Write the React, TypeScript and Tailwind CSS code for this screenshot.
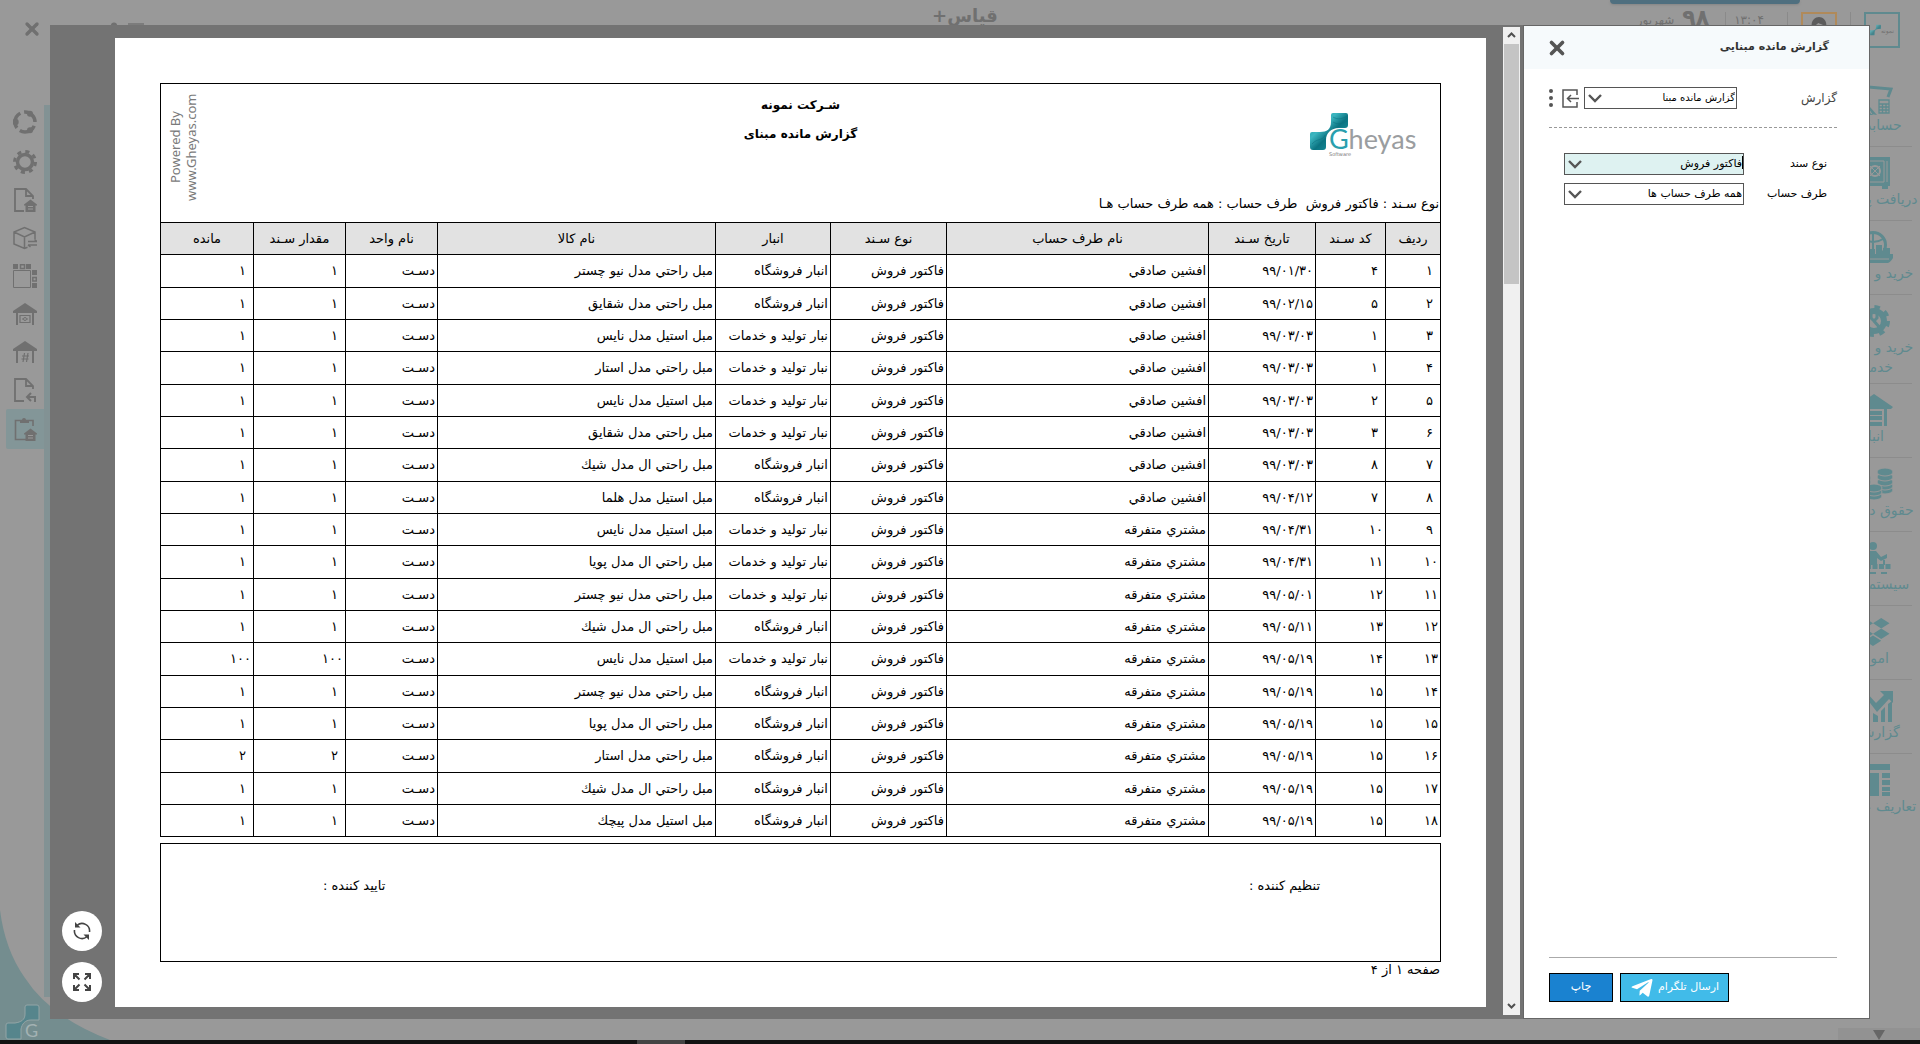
import { ReactNode, useState } from 'react';
import clsx from 'clsx';
import { X, Settings } from 'lucide-react';
import { FaTelegramPlane, FaDropbox } from 'react-icons/fa';

type Row = [string, string, string, string, string, string, string];

const FACTORY = 'نبار تولید و خدمات';
const STORE = 'انبار فروشگاه';
const AFSHIN = 'افشین صادقي';
const OTHER = 'مشتري متفرقه';

// ردیف، کد سند، تاریخ، طرف حساب، انبار، کالا، مقدار
const ROWS: Row[] = [
  ['۱', '۴', '۹۹/۰۱/۳۰', AFSHIN, STORE, 'مبل راحتي مدل نيو چستر', '۱'],
  ['۲', '۵', '۹۹/۰۲/۱۵', AFSHIN, STORE, 'مبل راحتي مدل شقايق', '۱'],
  ['۳', '۱', '۹۹/۰۳/۰۳', AFSHIN, FACTORY, 'مبل استيل مدل نايس', '۱'],
  ['۴', '۱', '۹۹/۰۳/۰۳', AFSHIN, FACTORY, 'مبل راحتي مدل استار', '۱'],
  ['۵', '۲', '۹۹/۰۳/۰۳', AFSHIN, FACTORY, 'مبل استيل مدل نايس', '۱'],
  ['۶', '۳', '۹۹/۰۳/۰۳', AFSHIN, FACTORY, 'مبل راحتي مدل شقايق', '۱'],
  ['۷', '۸', '۹۹/۰۳/۰۳', AFSHIN, STORE, 'مبل راحتي ال مدل شيك', '۱'],
  ['۸', '۷', '۹۹/۰۴/۱۲', AFSHIN, STORE, 'مبل استيل مدل هلما', '۱'],
  ['۹', '۱۰', '۹۹/۰۴/۳۱', OTHER, FACTORY, 'مبل استيل مدل نايس', '۱'],
  ['۱۰', '۱۱', '۹۹/۰۴/۳۱', OTHER, FACTORY, 'مبل راحتي ال مدل پويا', '۱'],
  ['۱۱', '۱۲', '۹۹/۰۵/۰۱', OTHER, FACTORY, 'مبل راحتي مدل نيو چستر', '۱'],
  ['۱۲', '۱۳', '۹۹/۰۵/۱۱', OTHER, STORE, 'مبل راحتي ال مدل شيك', '۱'],
  ['۱۳', '۱۴', '۹۹/۰۵/۱۹', OTHER, FACTORY, 'مبل استيل مدل نايس', '۱۰۰'],
  ['۱۴', '۱۵', '۹۹/۰۵/۱۹', OTHER, STORE, 'مبل راحتي مدل نيو چستر', '۱'],
  ['۱۵', '۱۵', '۹۹/۰۵/۱۹', OTHER, STORE, 'مبل راحتي ال مدل پويا', '۱'],
  ['۱۶', '۱۵', '۹۹/۰۵/۱۹', OTHER, STORE, 'مبل راحتي مدل استار', '۲'],
  ['۱۷', '۱۵', '۹۹/۰۵/۱۹', OTHER, STORE, 'مبل راحتي ال مدل شيك', '۱'],
  ['۱۸', '۱۵', '۹۹/۰۵/۱۹', OTHER, STORE, 'مبل استيل مدل پیچك', '۱'],
];

const COLUMNS = [
  { title: 'ردیف', width: 'w-[55px]' },
  { title: 'کد سـند', width: 'w-[70px]' },
  { title: 'تاریخ سـند', width: 'w-[107px]' },
  { title: 'نام طرف حساب', width: 'w-[262px]' },
  { title: 'نوع سـند', width: 'w-[116px]' },
  { title: 'انبار', width: 'w-[115px]' },
  { title: 'نام کالا', width: 'w-[278px]' },
  { title: 'نام واحد', width: 'w-[92px]' },
  { title: 'مقدار سـند', width: 'w-[92px]' },
  { title: 'مانده', width: 'w-[93px]' },
];

function Emblem({ className }: { className?: string }) {
  return (
    <svg className={className} viewBox="0 0 38 37">
      <defs>
        <linearGradient id="emblem" x1="0" y1="0" x2="1" y2="1">
          <stop offset="0" stopColor="#1595a3" />
          <stop offset="0.35" stopColor="#3cb6c0" />
          <stop offset="0.55" stopColor="#0b7482" />
          <stop offset="1" stopColor="#1fa5b3" />
        </linearGradient>
      </defs>
      <path
        d="M23 0h13a2 2 0 0 1 2 2v10a3 3 0 0 1-3 3h-6c-8 0-13 5-13 12v7a3 3 0 0 1-3 3H3a3 3 0 0 1-3-3V21a2 2 0 0 1 2-2h8c7 0 11-3 11-10V2a2 2 0 0 1 2-2z"
        fill="url(#emblem)"
      />
      <path d="M23 4c5 3 9 2 14-1M23 9c5 3 9 2 14-1M2 31c5-6 11-3 13-9" fill="none" stroke="#0a6f7d" strokeOpacity="0.5" />
    </svg>
  );
}

function ReportLogo() {
  return (
    <div className="relative h-[46px] w-[106px]" dir="ltr">
      <Emblem className="absolute top-0 left-0 h-[37px] w-[38px]" />
      <div className="absolute top-[16px] left-[19px]">
        <p className="h-[22px] font-['Lato'] text-[27px] leading-[20px] text-[#9a9da0]">
          <span className="text-[#2a9fae] [text-shadow:0_0_2px_#fff]">G</span>heyas
        </p>
        <p className="text-[5px] leading-[6px] text-[#777]">Software</p>
      </div>
    </div>
  );
}

function DocIcon({ children }: { children?: ReactNode }) {
  return (
    <svg className="size-6" viewBox="0 0 24 24" fill="none" stroke="currentColor" strokeWidth="1.8">
      <path d="M11 23H2V1h11l7 7v3M13 1v7h7" />
      {children}
    </svg>
  );
}

function House({ children }: { children?: ReactNode }) {
  return (
    <svg className="size-6" viewBox="0 0 24 24" fill="none" stroke="currentColor" strokeWidth="2">
      <path d="M12 1 24 9v2H0V9z" fill="currentColor" stroke="none" />
      <path d="M4 11v12M20 11v12" />
      {children}
    </svg>
  );
}

const smallHouse = (
  <>
    <path d="m17.500 11.500 6.500 5v1h-1.500v6.500h-10v-6.500H11v-1z" fill="currentColor" stroke="none" />
    <path d="M15 18.500h5M15 21h5" stroke="#999" strokeWidth="1" />
  </>
);

const railIcons: { label: string; icon: ReactNode }[] = [
  {
    label: 'گردش',
    icon: (
      <svg className="size-6" viewBox="0 0 24 24" fill="none" stroke="currentColor" strokeWidth="3.500">
        <circle cx="12" cy="12" r="10" strokeDasharray="17 3.940" strokeDashoffset="-4" />
        <g fill="currentColor" stroke="none">
          <circle cx="2.500" cy="12" r="3.200" />
          <circle cx="17" cy="3.800" r="3" />
          <circle cx="17" cy="20.200" r="3" />
        </g>
      </svg>
    ),
  },
  {
    label: 'تنظیمات',
    icon: (
      <svg className="size-6" viewBox="0 0 24 24" fill="none" stroke="currentColor">
        <circle cx="12" cy="12" r="7.500" strokeWidth="3.500" />
        <circle cx="12" cy="12" r="10.500" strokeWidth="3" strokeDasharray="4.100 4.146" />
      </svg>
    ),
  },
  { label: 'سند انبار', icon: <DocIcon>{smallHouse}</DocIcon> },
  {
    label: 'انتقال کالا',
    icon: (
      <svg className="size-6" viewBox="0 0 24 24" fill="none" stroke="currentColor" strokeWidth="1.500">
        <path d="M22 13V6L11.500 1.500 1 6v12l10.500 4.500 3-1.200M1 6l10.500 5L22 6M11.500 11v11.500M15 15.500h9M21.500 13.500l2.500 2M24 19h-9M17.500 21l-2.500-2" />
      </svg>
    ),
  },
  {
    label: 'گزارش جدولی',
    icon: (
      <svg className="size-6" viewBox="0 0 24 24" fill="none" stroke="currentColor" strokeWidth="1">
        <path d="M.5 6.500h17v17H.5z" />
        <path d="M0 0h5v5H0zM13 0h5v5h-5zM19 6h5v5h-5zM19 19h5v5h-5z" fill="currentColor" stroke="none" />
        <path d="M7.500.8h4v3.800h-4zM19.800 13.500h3.500v3.500h-3.500z" strokeWidth="1.500" />
      </svg>
    ),
  },
  {
    label: 'ارزش انبار',
    icon: (
      <House>
        <path d="M7 13.500h10v7H7zM9 17h1m4 0h1" strokeWidth="1.200" />
        <circle cx="12" cy="17" r="1.500" strokeWidth="1" />
      </House>
    ),
  },
  {
    label: 'موجودی انبار',
    icon: (
      <House>
        <path d="m11.500 13-1.500 9M15 13l-1.500 9M9 16h7M8.500 19h7" strokeWidth="1.200" />
      </House>
    ),
  },
  {
    label: 'برگشت',
    icon: (
      <DocIcon>
        <path d="M22 24v-5h-7M18 15l-4 4 4 4" strokeWidth="2" />
      </DocIcon>
    ),
  },
  {
    label: 'گزارش مبنایی',
    icon: (
      <svg className="size-6" viewBox="0 0 24 24" fill="none" stroke="currentColor" strokeWidth="1.600">
        <path d="M20 9V3.500H2.500v19H20" />
        <path d="M7 6V3h2a2 2 0 0 1 4 0h3v3z" fill="currentColor" stroke="none" />
        {smallHouse}
      </svg>
    ),
  },
];

const glyph = 'h-8 w-10 shrink-0';

const menuItems: { label: string[]; icon: ReactNode }[] = [
  {
    label: ['حسابداری'],
    icon: (
      <svg className={glyph} viewBox="0 0 40 32" fill="none" stroke="currentColor">
        <path d="M4 3 38 6l-3 8" strokeWidth="3" />
        <path d="M10 16 24 32l-6-1zM4 4v20l8 8h8l-8-12z" fill="currentColor" stroke="none" />
        <path d="M26 17h10v13H26zM26 21h10M26 24h10M26 27h10M29.500 21v9M33 21v9" strokeWidth="1.300" />
      </svg>
    ),
  },
  {
    label: ['دریافت پرداخت'],
    icon: (
      <svg className={glyph} viewBox="0 0 40 32" fill="none" stroke="currentColor">
        <path d="M2 0h35v29H2zM5 29h6v3H5zM29 29h6v3h-6z" fill="currentColor" stroke="none" />
        <path d="M6 4h25v21H6zM34 4v21" stroke="#999" />
        <circle cx="22" cy="14" r="5" stroke="#999" strokeWidth="2" />
        <path d="m17 9 10 10M27 9 17 19" stroke="#999" />
      </svg>
    ),
  },
  {
    label: ['خرید و فروش'],
    icon: (
      <svg className={glyph} viewBox="0 0 40 32" fill="none" stroke="currentColor">
        <circle cx="20" cy="14" r="12.500" strokeWidth="3" />
        <path d="M20 1v18M10 8c6 4 14 4 20 0" strokeWidth="2" />
        <path d="M2 23h38c2 3-2 8-5 9H6zM17 18h5v6h-5zM23 14h6v9h-6zM30 17h7v7h-7z" fill="currentColor" stroke="none" />
        <path d="M4 28h32" stroke="#999" />
      </svg>
    ),
  },
  {
    label: ['خرید و فروش', 'خدمات'],
    icon: (
      <svg className={glyph} viewBox="0 0 40 32" fill="none" stroke="currentColor">
        <circle cx="21" cy="16" r="10" strokeWidth="6" />
        <circle cx="21" cy="16" r="14" strokeWidth="4" strokeDasharray="5.500 5.495" />
        <path d="m21 16 6 7M18 9v4l3 3 3-3V9" strokeWidth="3" />
      </svg>
    ),
  },
  {
    label: ['انبار'],
    icon: (
      <svg className={glyph} viewBox="0 0 40 32" fill="none" stroke="currentColor">
        <path d="M21 0 40 13l-2 2h-4v17h-3V15H11v17H8V15H4l-2-2z" fill="currentColor" stroke="none" />
        <path d="M13 19h16M13 24h16M13 30h16" strokeWidth="4" />
      </svg>
    ),
  },
  {
    label: ['حقوق دستمزد'],
    icon: (
      <svg className={glyph} viewBox="0 0 40 32" fill="currentColor" stroke="#999" strokeWidth="1">
        {[26, 22, 18, 14, 10].map((y) => <ellipse key={y} cx="9" cy={y} rx="9" ry="4" />)}
        {[22, 18, 14, 9, 4].map((y) => <ellipse key={y} cx="32" cy={y} rx="8" ry="4" />)}
        {[28, 24, 20].map((y) => <ellipse key={y} cx="21" cy={y} rx="8" ry="4" />)}
      </svg>
    ),
  },
  {
    label: ['سیستم تولید'],
    icon: (
      <svg className={glyph} viewBox="0 0 40 32" fill="none" stroke="currentColor">
        <circle cx="20" cy="4" r="4" fill="currentColor" stroke="none" />
        <path d="M16 9h7l5 6 6-3v4l-6 3-4-3v7h-9z" fill="currentColor" stroke="none" />
        <path d="M0 24.500h38" strokeWidth="5" strokeDasharray="5 1.500" />
        <path d="M31 18v5M6 31h6M17 31h6M28 31h6" strokeWidth="2" />
      </svg>
    ),
  },
  { label: ['اموال'], icon: <FaDropbox className={glyph} /> },
  {
    label: ['گزارشات'],
    icon: (
      <svg className={glyph} viewBox="0 0 40 32" fill="currentColor">
        <path d="M2 16 13 2l10 11 8-8-4-4h13v12l-4-4-12 13L14 9 6 20zM2 24l6-4v12H2zM12 16l5 5v11h-5zM20 23l5 3v6h-5zM28 21l4-4v15h-4zM35 14l4-3v21h-4z" />
      </svg>
    ),
  },
  {
    label: ['تعاریف عمومی'],
    icon: (
      <svg className={glyph} viewBox="0 0 40 32" fill="currentColor">
        <path d="M3 0h34v6H3zM3 9h10v23H3zM15 9h11v23H15zM29 9h8v5h-8zM29 16h8v5h-8zM29 23h8v4h-8zM29 28h8v4h-8z" />
      </svg>
    ),
  },
];

function Backdrop() {
  return (
    <div className="flex min-h-screen flex-col bg-[#999999] text-[#707070]">
      <header className="grid h-[48px] shrink-0 grid-cols-[1fr_auto_1fr] items-start pr-5 pl-[22px]" dir="ltr">
        <div className="flex items-start gap-5 pt-[19px]">
          <X className="size-5" strokeWidth={4} />
          <div className="h-5 w-[22px]" />
          <div className="flex gap-1 pt-[3px]">
            <Settings className="size-5" strokeWidth={3} />
            <div className="mt-px h-3 w-4 bg-[#7c7c7c]" />
          </div>
        </div>
        <h1 className="pl-2 text-[18px] leading-8 font-bold" dir="rtl">قیاس+</h1>
        <div className="flex items-start justify-end gap-[13px]">
          <div className="mr-[10px] flex h-7 items-end gap-2 text-[12px] leading-4">
            <span>شهریور</span>
            <span className="text-[22px] leading-5 font-bold">۹۸</span>
            <span className="ml-2 border-l border-[#8a8a8a] pl-2">۱۳:۰۴</span>
          </div>
          <div className="mt-3 h-6 w-px bg-[#8a8a8a]" />
          <div className="mt-3 flex size-9 justify-center border-2 border-[#b08a5a] pt-[2px]">
            <svg className="size-6" viewBox="0 0 24 24">
              <path d="M5 12C3 4 9 1 12 1s9 3 7 11c-2-4-6-4-8-5-1 2-4 2-6 5z" fill="#5c5c5c" />
            </svg>
          </div>
          <div className="mt-3 h-6 w-px bg-[#8a8a8a]" />
          <div className="mt-3 flex size-9 items-center border-2 border-[#5f8a8f] px-1">
            <Emblem className="h-4 w-4 opacity-60" />
            <span className="text-[6px]">نمونه</span>
          </div>
        </div>
      </header>

      <div className="flex flex-1 justify-between" dir="ltr">
        <nav className="flex" aria-label="ابزارها">
          <ul className="flex w-[44px] flex-col items-end pt-[53px]">
            {railIcons.map(({ label, icon }, i) => (
              <li key={label}>
                <button
                  type="button"
                  aria-label={label}
                  className={clsx(
                    'flex w-[38px] items-center justify-center rounded-l-xs',
                    i === 0 && 'h-[42px]',
                    i > 0 && i < 8 && 'h-[38px]',
                    i === 8 && 'h-10 bg-[#839698]',
                  )}
                >
                  {icon}
                </button>
              </li>
            ))}
          </ul>
          <div className="mt-[57px] mb-[43px] w-2 bg-[#829294]" />
        </nav>
        <nav className="w-[87px] pr-2 text-[#5f8a8f]" aria-label="منوی اصلی">
          <ul className="pt-[25px]">
            {menuItems.map(({ label, icon }) => (
              <li
                key={label.join()}
                className={clsx(
                  'flex flex-col items-center border-b border-[#8c8c8c] pt-[10px] last:border-0',
                  label.length > 1 ? 'pb-[6px]' : 'pb-[11px]',
                )}
              >
                {icon}
                {label.map((line) => (
                  <a key={line} href="#" dir="rtl" className="text-[14px] leading-5 whitespace-nowrap">
                    {line}
                  </a>
                ))}
              </li>
            ))}
          </ul>
        </nav>
      </div>

      <footer className="flex h-1 justify-start bg-[#121212] pl-[637px]" dir="ltr">
        <div className="h-1 w-12 bg-[#444]" />
      </footer>

      {/* تب بالای صفحه */}
      <div className="absolute top-0 right-[120px] h-1 w-[190px] rounded-b bg-[#4f6f7f] shadow" />
      {/* گوشه پایین */}
      <div className="absolute bottom-1 left-0">
        <svg className="h-[130px] w-[110px]" viewBox="0 0 110 130">
          <path d="M0 0Q5 40 25 68 50 107 110 130H0z" fill="#748d8f" />
          <path
            d="M27 95h10a2 2 0 0 1 2 2v13h-8c-6 0-9 4-10 9v10H8a2 2 0 0 1-2-2v-12a2 2 0 0 1 2-2h7c6-1 10-3 10-9v-7a2 2 0 0 1 2-2z"
            fill="#56858c"
            stroke="#93a5a6"
          />
        </svg>
        <span className="absolute bottom-0 left-[25px] font-['Lato'] text-[18px] leading-5 text-[#a3b2b3]">G</span>
      </div>
      <div className="absolute right-0 bottom-1 flex h-3 w-[82px] items-start bg-[#929292] pt-[2px] pl-[35px]" dir="ltr">
        <svg className="h-[10px] w-3" viewBox="0 0 12 10">
          <path d="M0 0h12L6 10z" fill="#666" />
        </svg>
      </div>
    </div>
  );
}

function ReportPage() {
  return (
    <article className="flex-1 bg-white px-[45px] pt-[45px] text-[13px] text-black">
      <header className="grid h-[139px] grid-cols-3 border border-b-0 border-black">
        <div className="pt-[29px] pr-[24px]">
          <ReportLogo />
        </div>
        <div className="flex flex-col items-center gap-[7px] pt-[10px] text-[12px] leading-[22px] font-bold">
          <h2>شـرکت نمونه</h2>
          <h2>گزارش مانده مبنای</h2>
        </div>
        <div className="flex justify-end pt-2 pl-[6px]">
          <p className="h-[110px] rotate-180 text-center font-['Noto_Sans'] text-[13px] leading-4 text-[#7a7a7a] [writing-mode:vertical-rl]" dir="ltr">
            Powered By
            <br />
            www.Gheyas.com
          </p>
        </div>
        <p className="col-span-3 -mt-4 pr-px leading-5">
          نوع سـند : فاکتور فروش &nbsp;طرف حساب : همه طرف حساب هـا
        </p>
      </header>

      <table className="w-full table-fixed border-collapse leading-4">
        <thead>
          <tr className="h-8 bg-[#e2e2e2]">
            {COLUMNS.map((col) => (
              <th key={col.title} className={clsx('border border-black p-0 font-normal', col.width)}>
                {col.title}
              </th>
            ))}
          </tr>
        </thead>
        <tbody>
          {ROWS.map(([index, code, date, party, store, product, amount], i) => (
            <tr key={index} className={clsx(i % 3 === 0 ? 'h-[33px]' : 'h-8')}>
              {[index, code, date, party, 'فاکتور فروش', store, product, 'دسـت', amount, amount].map((value, col) => (
                <td
                  key={col}
                  className={clsx(
                    'border border-black py-0 pl-0 text-right whitespace-nowrap',
                    value.length === 1 ? 'pr-[7px]' : 'pr-[2px]',
                  )}
                >
                  {value}
                </td>
              ))}
            </tr>
          ))}
        </tbody>
      </table>

      <footer>
        <div className="mt-[6px] flex h-[119px] justify-between border border-black pt-8 pr-[120px] pl-[162px] leading-5">
          <span>تنظیم کننده :</span>
          <span>تایید کننده :</span>
        </div>
        <p className="pr-px leading-4">صفحه ۱ از ۴</p>
      </footer>
    </article>
  );
}

function Scrollbar() {
  return (
    <div className="mt-[2px] mb-1 flex w-[17px] flex-col items-center bg-[#f0f0f0]" aria-hidden="true">
      <svg className="my-1 size-[9px]" viewBox="0 0 9 9" fill="none" stroke="#505050" strokeWidth="2">
        <path d="m1 6 3.500-3.500L8 6" />
      </svg>
      <div className="h-[240px] w-[15px] bg-[#c4c4c4]" />
      <svg className="mt-auto mb-1 size-[9px]" viewBox="0 0 9 9" fill="none" stroke="#505050" strokeWidth="2">
        <path d="m1 2 3.500 3.500L8 2" />
      </svg>
    </div>
  );
}

interface SelectFieldProps {
  id: string;
  options: string[];
  highlighted?: boolean;
  className?: string;
}

function SelectField({ id, options, highlighted = false, className }: SelectFieldProps) {
  const [value, setValue] = useState(options[0]);

  return (
    <div className={clsx('relative shrink-0', className)}>
      <select
        id={id}
        value={value}
        onChange={(e) => setValue(e.target.value)}
        className={clsx(
          'block h-[22px] w-full appearance-none border border-[#555] pr-px pl-6 leading-4 text-black',
          highlighted ? 'bg-[#def2f1]' : 'bg-white',
        )}
      >
        {options.map((option) => (
          <option key={option}>{option}</option>
        ))}
      </select>
      <svg className="pointer-events-none absolute top-[7px] left-[4px] h-[9px] w-[14px]" viewBox="0 0 14 9" fill="none" stroke="#555" strokeWidth="2.400">
        <path d="m1 1 6 6 6-6" />
      </svg>
      {/* نشانگر متن فیلد فعال */}
      {highlighted && <span className="absolute top-[3px] right-px h-[13px] w-px bg-black" />}
    </div>
  );
}

function FilterPanel() {
  return (
    <aside className="flex w-[347px] flex-col border border-[#666] bg-white text-[11px] text-black">
      <header className="flex h-[43px] items-center justify-between bg-[#f6fafc] pr-10 pl-[22px]">
        <h2 className="font-bold text-[#333]">گزارش مانده مبنایی</h2>
        <button type="button" aria-label="بستن">
          <X className="size-[22px] text-[#555]" strokeWidth={4} />
        </button>
      </header>

      <div className="mr-8 ml-[25px] flex h-[59px] items-center border-b border-dashed border-[#999] text-[10px]">
        <label htmlFor="report" className="w-[100px] text-[12px] text-[#444]">گزارش</label>
        <SelectField id="report" options={['گزارش مانده مبنا']} className="w-[153px]" />
        <button type="button" aria-label="ورود گزارش" className="mr-[5px]">
          <svg className="h-[19px] w-[17px]" viewBox="0 0 17 19" fill="none" stroke="#555" strokeWidth="1.500">
            <path d="M15 6V1H1v17h14v-5M17 9.500H6M9 6 5.500 9.500 9 13" />
          </svg>
        </button>
        <button type="button" aria-label="بیشتر" className="mr-[9px]">
          <svg className="h-[18px] w-1" viewBox="0 0 4 18" fill="#555">
            <circle cx="2" cy="2" r="2" />
            <circle cx="2" cy="9" r="2" />
            <circle cx="2" cy="16" r="2" />
          </svg>
        </button>
      </div>

      <div className="flex flex-col gap-2 pt-[25px] pr-[42px]">
        <div className="flex items-center">
          <label htmlFor="doc-type" className="w-[83px]">نوع سند</label>
          <SelectField id="doc-type" options={['فاکتور فروش']} highlighted className="w-[180px]" />
        </div>
        <div className="flex items-center">
          <label htmlFor="party" className="w-[83px]">طرف حساب</label>
          <SelectField id="party" options={['همه طرف حساب ها']} className="w-[180px]" />
        </div>
      </div>

      <footer className="mt-auto mr-8 mb-4 ml-[25px] flex flex-row-reverse justify-end gap-[7px] border-t border-[#aaa] pt-[15px] text-white" dir="ltr">
        <button type="button" dir="rtl" className="flex h-[29px] w-[109px] items-center justify-center gap-1 border border-black bg-[#41bbe9] whitespace-nowrap">
          ارسال تلگرام
          <FaTelegramPlane className="size-6" />
        </button>
        <button type="button" className="h-[29px] w-16 border border-black bg-[#1a82d0]">چاپ</button>
      </footer>
    </aside>
  );
}

function RoundButton({ label, children }: { label: string; children: ReactNode }) {
  return (
    <button type="button" aria-label={label} className="flex size-10 items-center justify-center rounded-full bg-white text-[#444]">
      {children}
    </button>
  );
}

export default function App() {
  return (
    <div dir="rtl" className="relative overflow-hidden font-['DejaVu_Sans',sans-serif]">
      <Backdrop />

      <div className="absolute inset-x-[50px] inset-y-[25px] flex bg-[#737373]" role="dialog" aria-label="گزارش مانده مبنایی">
        <FilterPanel />
        <div className="mr-[3px] flex">
          <Scrollbar />
        </div>
        <main className="flex flex-1 pt-[13px] pr-[17px] pb-3">
          <ReportPage />
        </main>
        <div className="flex w-[65px] flex-col items-center justify-end gap-[11px] pr-[2px] pb-[17px]">
          <RoundButton label="بارگذاری مجدد">
            <svg className="size-[18px]" viewBox="0 0 18 18" fill="none" stroke="currentColor" strokeWidth="1.600">
              <path d="M4 3.500A7.500 7.500 0 0 1 16.500 10M14 14.500A7.500 7.500 0 0 1 1.500 8" />
              <path d="M2 0v5.500h5.500zM16 18v-5.500h-5.500z" fill="currentColor" stroke="none" />
            </svg>
          </RoundButton>
          <RoundButton label="تمام صفحه">
            <svg className="size-[18px]" viewBox="0 0 18 18" fill="none" stroke="currentColor" strokeWidth="2">
              <path d="M1 6V1h5M1 1l5.500 5.500M12 1h5v5M17 1l-5.500 5.500M1 12v5h5M1 17l5.500-5.500M17 12v5h-5M17 17l-5.500-5.500" />
            </svg>
          </RoundButton>
        </div>
      </div>
    </div>
  );
}
